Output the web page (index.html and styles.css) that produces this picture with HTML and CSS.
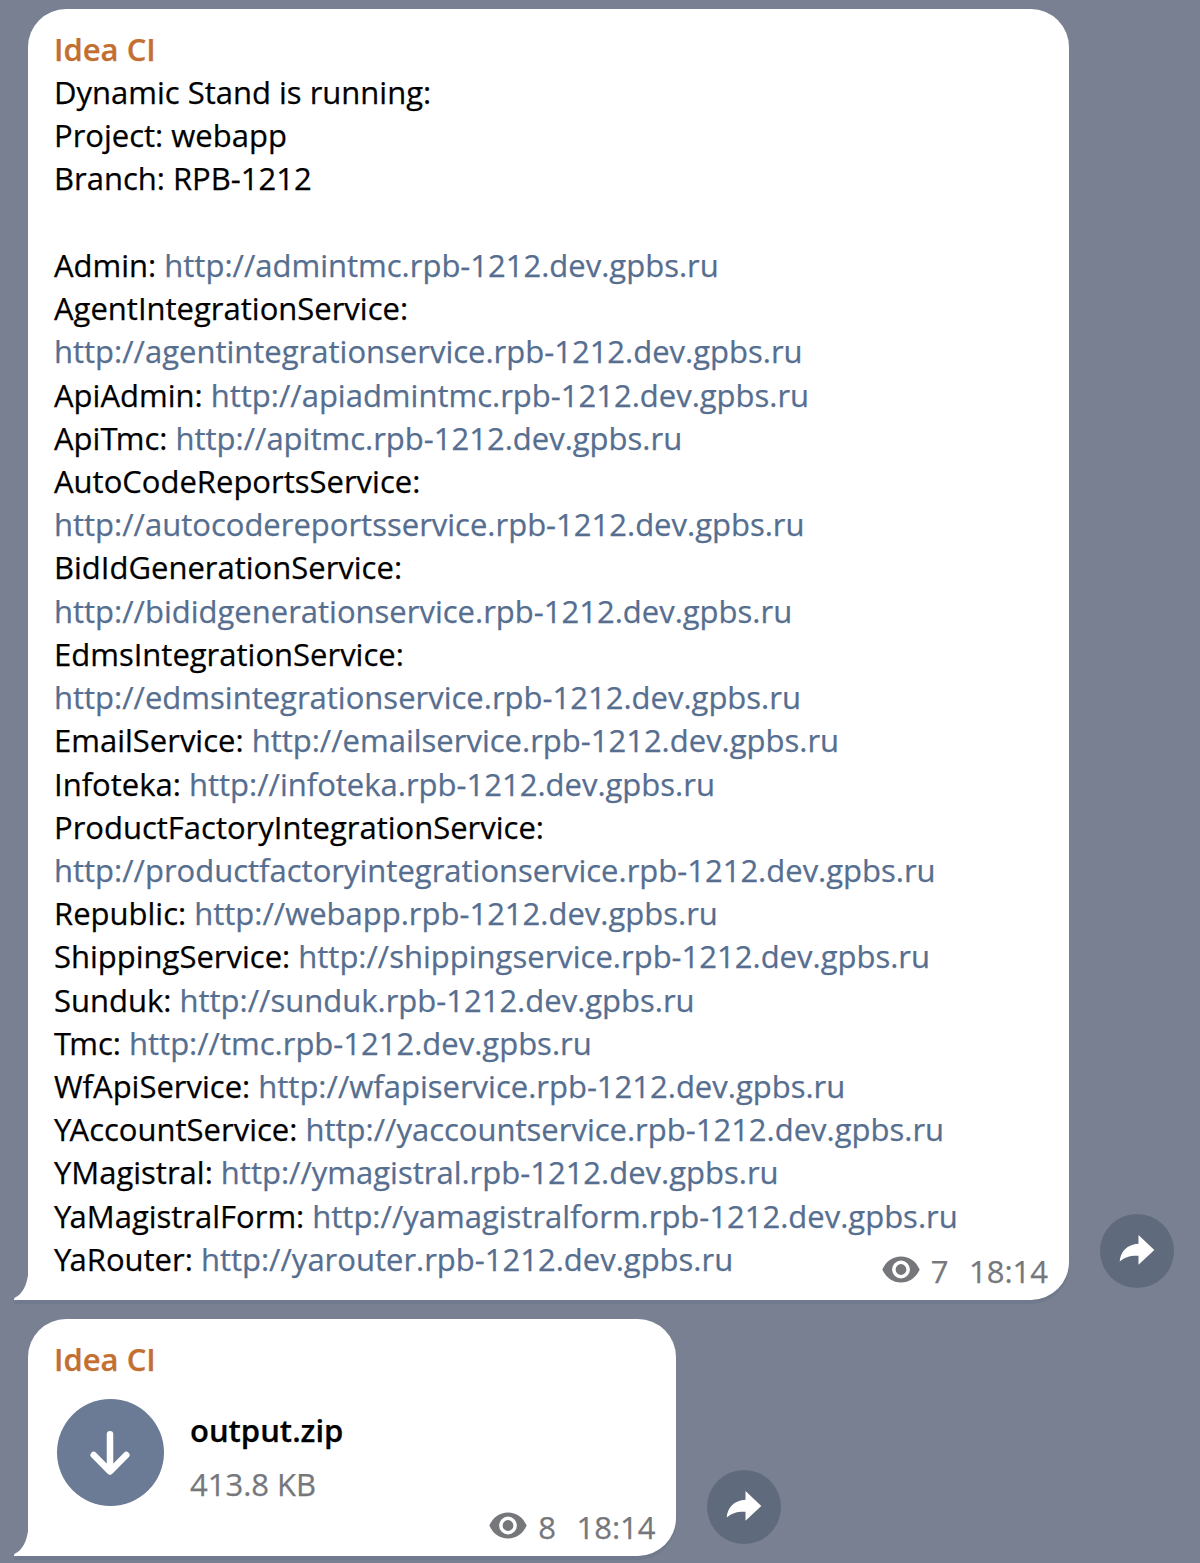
FILE: index.html
```html
<!DOCTYPE html>
<html lang="en">
<head>
<meta charset="utf-8">
<title>Idea CI</title>
<link rel="stylesheet" href="styles.css">
</head>
<body>
<svg class="sprite" width="0" height="0" aria-hidden="true">
  <symbol id="eye" viewBox="0 0 38 27"><path fill-rule="evenodd" d="M.3 13.5C4 5.500 10.500.5 19 .5s15 5 18.700 13C34 21.500 27.500 26.500 19 26.500S4 21.500.3 13.500ZM19 4.600a8.900 8.900 0 1 0 0 17.800 8.900 8.900 0 0 0 0-17.800Zm0 3.500a5.400 5.400 0 1 1 0 10.800 5.400 5.400 0 0 1 0-10.800Z"/></symbol>
  <symbol id="forward" viewBox="0 0 36 32"><path d="M19.500 1 35.300 16 19.500 30.800V21.700C11.500 21.300 5.500 23 .7 27.500 1.300 17.500 8 10.500 19.500 9.700Z"/></symbol>
  <symbol id="tail" viewBox="0 0 15 25"><path d="M15 0H14C12.500 11 8 19.500 .7 22.800Q0 23.200 0 25H15Z"/></symbol>
</svg>
<main class="chat">
  <section class="message">
    <article class="bubble bubble-text">
      <h2 class="sender">Idea CI</h2>
      <div class="text">
        <div>Dynamic Stand is running:</div>
        <div>Project: webapp</div>
        <div>Branch: RPB-1212</div>
        <div class="blank"></div>
        <div>Admin: <a>http://admintmc.rpb-1212.dev.gpbs.ru</a></div>
        <div>AgentIntegrationService:</div>
        <div><a>http://agentintegrationservice.rpb-1212.dev.gpbs.ru</a></div>
        <div>ApiAdmin: <a>http://apiadmintmc.rpb-1212.dev.gpbs.ru</a></div>
        <div>Api<span class="kern">T</span>mc: <a>http://apitmc.rpb-1212.dev.gpbs.ru</a></div>
        <div>AutoCodeReportsService:</div>
        <div><a>http://autocodereportsservice.rpb-1212.dev.gpbs.ru</a></div>
        <div>BidIdGenerationService:</div>
        <div><a>http://bididgenerationservice.rpb-1212.dev.gpbs.ru</a></div>
        <div>EdmsIntegrationService:</div>
        <div><a>http://edmsintegrationservice.rpb-1212.dev.gpbs.ru</a></div>
        <div>EmailService: <a>http://emailservice.rpb-1212.dev.gpbs.ru</a></div>
        <div>Infoteka: <a>http://infoteka.rpb-1212.dev.gpbs.ru</a></div>
        <div>ProductFactoryIntegrationService:</div>
        <div><a>http://productfactoryintegrationservice.rpb-1212.dev.gpbs.ru</a></div>
        <div>Republic: <a>http://webapp.rpb-1212.dev.gpbs.ru</a></div>
        <div>ShippingService: <a>http://shippingservice.rpb-1212.dev.gpbs.ru</a></div>
        <div>Sunduk: <a>http://sunduk.rpb-1212.dev.gpbs.ru</a></div>
        <div><span class="kern">T</span>mc: <a>http://tmc.rpb-1212.dev.gpbs.ru</a></div>
        <div>WfApiService: <a>http://wfapiservice.rpb-1212.dev.gpbs.ru</a></div>
        <div><span class="kern">Y</span>AccountService: <a>http://yaccountservice.rpb-1212.dev.gpbs.ru</a></div>
        <div>YMagistral: <a>http://ymagistral.rpb-1212.dev.gpbs.ru</a></div>
        <div><span class="kern">Y</span>aMagistralForm: <a>http://yamagistralform.rpb-1212.dev.gpbs.ru</a></div>
        <div><span class="kern">Y</span>aRouter: <a>http://yarouter.rpb-1212.dev.gpbs.ru</a></div>
      </div>
      <div class="meta"><svg class="eye"><use href="#eye"/></svg><span class="views">7</span><time>18:14</time></div>
      <svg class="tail"><use href="#tail"/></svg>
    </article>
    <button class="share" aria-label="Forward"><svg class="arrow"><use href="#forward"/></svg></button>
  </section>
  <section class="message">
    <article class="bubble bubble-file">
      <h2 class="sender">Idea CI</h2>
      <div class="file">
        <div class="download"><svg width="42" height="46" viewBox="0 0 42 46"><path d="M20 5.300V42M3.700 26 20 42.500 36.300 26"/></svg></div>
        <div class="info">
          <div class="name">output.zip</div>
          <div class="size">413.8 KB</div>
        </div>
      </div>
      <div class="meta"><svg class="eye"><use href="#eye"/></svg><span class="views">8</span><time>18:14</time></div>
      <svg class="tail"><use href="#tail"/></svg>
    </article>
    <button class="share" aria-label="Forward"><svg class="arrow"><use href="#forward"/></svg></button>
  </section>
</main>
</body>
</html>
```
FILE: styles.css
```css
* { box-sizing: border-box; }

body {
  margin: 0;
  height: 1563px;
  overflow: hidden;
  background: #788092;
  font-family: "Open Sans", sans-serif;
  font-size: 31px;
  line-height: 43.22px;
  color: #000;
  -webkit-text-stroke: 0.25px;
}

.sprite { display: none; }

.chat {
  display: flex;
  flex-direction: column;
  gap: 19px;
  padding: 8.500px 0 0 28px;
}

.message {
  display: flex;
  align-items: flex-end;
  gap: 31.300px;
}

.bubble {
  position: relative;
  background: #fff;
  border-radius: 38px 38px 38px 0;
  box-shadow: 0 4px 0 #707a8c;
  padding: 19px 26px 0;
}

.bubble-text { width: 1040.500px; height: 1291.500px; }
.bubble-file { width: 648px; height: 237px; }

.sender {
  margin: 0;
  font-size: 31px;
  font-weight: 600;
  color: #c36f32;
}

.text { padding-top: 0.300px; white-space: nowrap; }
.text a { color: #566e8f; }
.blank { height: 43.22px; }

/* Tightens capitals that overhang the next letter; the trailing pair loses its built-in kerning */
.kern { letter-spacing: -1.800px; }

.meta {
  position: absolute;
  right: 20.500px;
  bottom: 6.500px;
  display: flex;
  align-items: center;
  color: #75777b;
}

.eye { width: 38px; height: 27px; margin: 0 11px 4px 0; fill: #75777b; }
.views { margin-right: 20.500px; }

.tail {
  position: absolute;
  left: -14px;
  bottom: 0;
  width: 15px;
  height: 25px;
  fill: #fff;
  filter: drop-shadow(0 4px 0 #707a8c);
  clip-path: inset(0 1px -4px 0);
}

.share {
  display: flex;
  flex: none;
  align-items: center;
  justify-content: center;
  width: 74px;
  height: 74px;
  margin: 0 0 12.500px;
  padding: 0;
  border: 0;
  border-radius: 50%;
  background: #5f6a7c;
}

.arrow { width: 36px; height: 32px; margin: 0 0 1px; fill: #fff; }

.file { display: flex; gap: 26px; padding: 17.500px 0 0 3px; }

.download {
  display: flex;
  align-items: center;
  justify-content: center;
  width: 107px;
  height: 107px;
  border-radius: 50%;
  background: #6b7b95;
}

.download path {
  fill: none;
  stroke: #fff;
  stroke-width: 6.500;
  stroke-linecap: round;
  stroke-linejoin: round;
}

.info { padding-top: 10.500px; }
.name { font-weight: 600; }
.size { margin-top: 10.500px; color: #75777b; }
```
